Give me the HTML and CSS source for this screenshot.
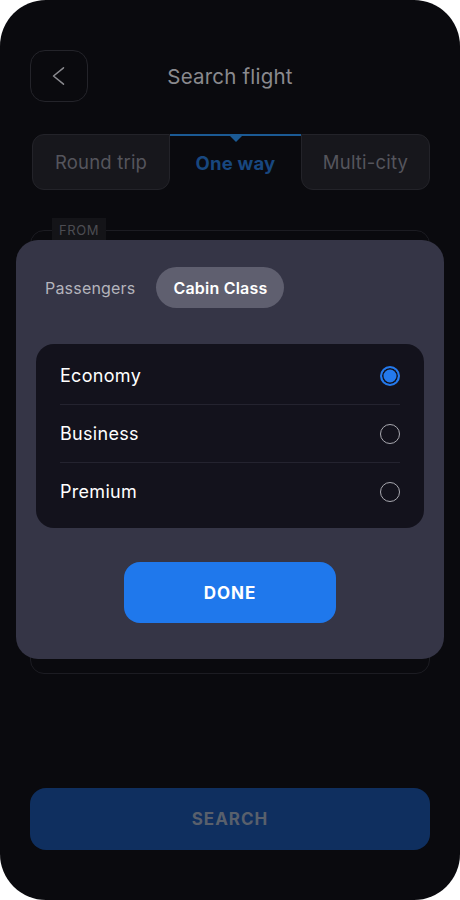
FILE: index.html
```html
<!DOCTYPE html>
<html>
  <head>
    <meta charset="utf-8">
    <meta name="viewport" content="width=device-width, initial-scale=1">
    <title>Search flight</title>
    <link rel="stylesheet" href="styles.css">
  </head>
  <body>
    <main class="phone">
      <header class="topbar">
        <button class="back" aria-label="Back">
          <svg width="20" height="20" viewBox="0 0 20 20" fill="none">
            <path d="M14.5 1.8 4.5 10 14.5 18.2" stroke="#8a8a8f" stroke-width="1.5" stroke-linecap="round" stroke-linejoin="round"/>
          </svg>
        </button>
        <h1>Search flight</h1>
      </header>

      <nav class="trip-tabs">
        <button class="trip-tab first">Round trip</button>
        <button class="trip-tab active">One way</button>
        <button class="trip-tab last">Multi-city</button>
      </nav>

      <fieldset class="route">
        <legend>FROM</legend>
      </fieldset>

      <button class="search">SEARCH</button>

      <!-- bottom sheet over the form -->
      <section class="sheet">
        <div class="sheet-tabs">
          <button class="sheet-tab">Passengers</button>
          <button class="sheet-tab active">Cabin Class</button>
        </div>

        <ul class="cabins">
          <li class="cabin">
            <span>Economy</span>
            <span class="radio checked"></span>
          </li>
          <li class="cabin">
            <span>Business</span>
            <span class="radio"></span>
          </li>
          <li class="cabin">
            <span>Premium</span>
            <span class="radio"></span>
          </li>
        </ul>

        <button class="done">DONE</button>
      </section>
    </main>
  </body>
</html>
```

FILE: styles.css
```css
body {
  margin: 0;
  background: #fff;
  font-family: Inter, "Noto Sans", sans-serif;
}

button {
  font-family: inherit;
  border: 0;
  background: none;
  padding: 0;
  cursor: pointer;
}

.phone {
  position: relative;
  width: 460px;
  height: 900px;
  box-sizing: border-box;
  padding: 50px 30px 0;
  border-radius: 46px;
  background: #0a0a0e;
  overflow: hidden;
}

.topbar {
  display: grid;
  grid-template-columns: 58px 1fr 58px;
  align-items: center;
  height: 52px;
}

.back {
  width: 58px;
  height: 52px;
  box-sizing: border-box;
  border: 1px solid #24242a;
  border-radius: 15px;
  display: flex;
  align-items: center;
  justify-content: center;
}

.topbar h1 {
  margin: 0;
  text-align: center;
  font-size: 20.5px;
  font-weight: 400;
  letter-spacing: 0.2px;
  color: #8a8a8f;
}

.trip-tabs {
  display: grid;
  grid-template-columns: 138px 131px 1fr;
  height: 56px;
  margin: 32px 0 0 2px;
}

.trip-tab {
  font-size: 18.5px;
  letter-spacing: 0.2px;
  color: #55555c;
  background: #17171c;
  border: 1px solid #232329;
}

.trip-tab.first {
  border-radius: 12px 0 12px 12px;
}

.trip-tab.last {
  border-radius: 0 12px 12px 12px;
}

.trip-tab.active {
  position: relative;
  background: none;
  border: 0;
  border-top: 2px solid #1b5a94;
  color: #18477f;
  font-weight: 700;
}

.trip-tab.active::after {
  content: "";
  position: absolute;
  top: 0;
  left: 60px;
  border: 6px solid transparent;
  border-top-color: #1b5a94;
  border-bottom: 0;
}

.route {
  margin: 28px 0 0;
  padding: 0 21px;
  height: 456px;
  box-sizing: border-box;
  border: 1px solid #1c1c22;
  border-radius: 14px;
}

.route legend {
  padding: 0 7px;
  line-height: 25px;
  font-size: 13px;
  letter-spacing: 0.6px;
  color: #4c4c52;
  background: #141418;
}

.search {
  display: block;
  width: 100%;
  height: 62px;
  margin-top: 114px;
  border-radius: 16px;
  background: #0f2f5f;
  color: #59606c;
  font-size: 17px;
  font-weight: 700;
  letter-spacing: 1px;
}

.sheet {
  position: absolute;
  left: 16px;
  top: 240px;
  width: 428px;
  height: 419px;
  box-sizing: border-box;
  padding: 27px 20px 0;
  border-radius: 22px;
  background: #353546;
}

.sheet-tabs {
  display: flex;
  gap: 5px;
  margin-left: -7px;
}

.sheet-tab {
  height: 41px;
  padding: 0 16px;
  border-radius: 21px;
  font-size: 16px;
  letter-spacing: 0.2px;
  color: #b4b4bc;
}

.sheet-tab.active {
  padding: 0 17px;
  background: #5f5f6f;
  color: #fff;
  font-weight: 600;
}

.cabins {
  list-style: none;
  margin: 36px 0 0;
  padding: 3px 24px 8px;
  border-radius: 18px;
  background: #13121c;
}

.cabin {
  display: flex;
  align-items: center;
  justify-content: space-between;
  height: 57px;
  font-size: 18px;
  letter-spacing: 0.3px;
  color: #fff;
  border-bottom: 1px solid #24232f;
}

.cabin:last-child {
  border-bottom: 0;
}

.radio {
  width: 20px;
  height: 20px;
  box-sizing: border-box;
  border: 1.5px solid #a9a9b0;
  border-radius: 50%;
}

.radio.checked {
  border: 2px solid #2479ec;
  background: #2479ec;
  box-shadow: inset 0 0 0 1.5px #13121c;
}

.done {
  display: block;
  width: 212px;
  height: 61px;
  margin: 34px auto 0;
  border-radius: 16px;
  background: #1f78ec;
  color: #fff;
  font-size: 17px;
  font-weight: 700;
  letter-spacing: 1px;
}
```
